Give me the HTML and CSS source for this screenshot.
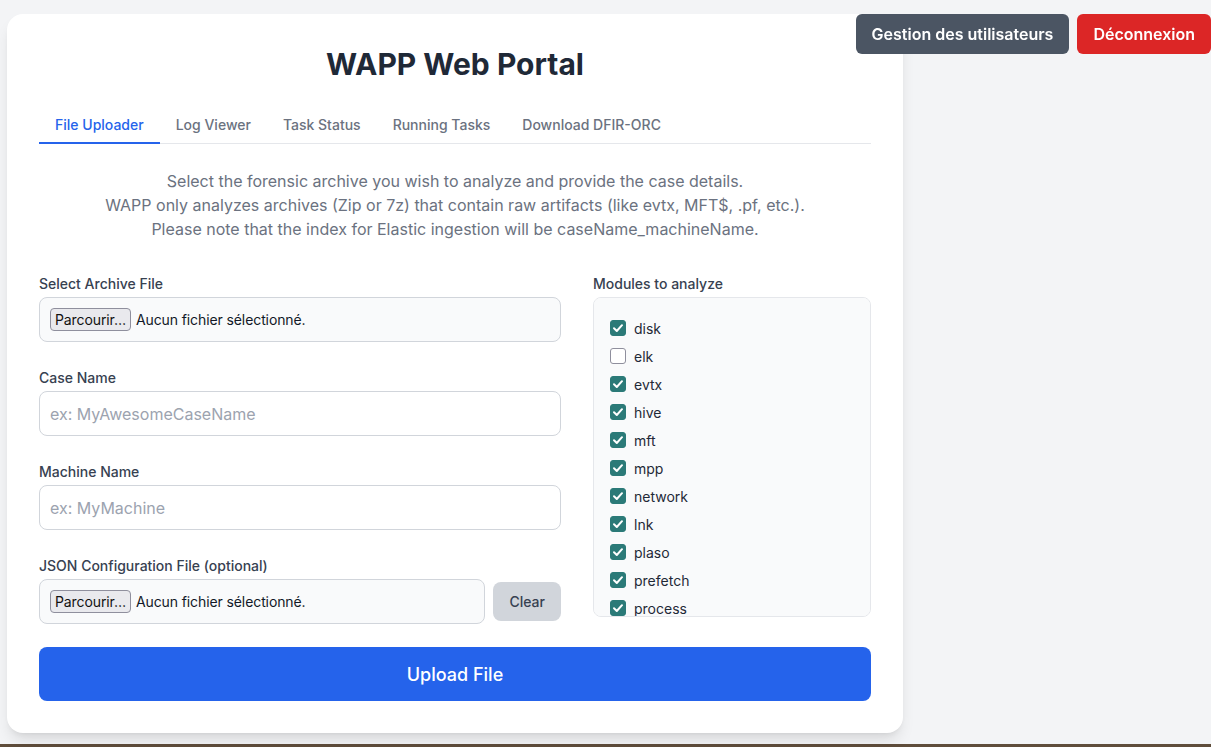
FILE: index.html
```html
<!DOCTYPE html>
<html lang="fr">
<head>
<meta charset="utf-8">
<title>WAPP Web Portal</title>
<link rel="stylesheet" href="styles.css">
</head>
<body>
<div class="top-actions">
  <button class="action-btn users-btn" type="button">Gestion des utilisateurs</button>
  <button class="action-btn logout-btn" type="button">Déconnexion</button>
</div>
<main class="page">
  <div class="card">
    <h1 class="title">WAPP Web Portal</h1>
    <nav class="tabs">
      <a class="tab active">File Uploader</a>
      <a class="tab">Log Viewer</a>
      <a class="tab">Task Status</a>
      <a class="tab">Running Tasks</a>
      <a class="tab">Download DFIR-ORC</a>
    </nav>
    <p class="intro">Select the forensic archive you wish to analyze and provide the case details.<br>WAPP only analyzes archives (Zip or 7z) that contain raw artifacts (like evtx, MFT$, .pf, etc.).<br>Please note that the index for Elastic ingestion will be caseName_machineName.</p>
    <form class="upload-form">
      <div class="form-grid">
        <div class="col-left">
          <div class="field">
            <label class="field-label">Select Archive File</label>
            <div class="file-input"><span class="file-btn">Parcourir…</span><span class="file-name">Aucun fichier sélectionné.</span></div>
          </div>
          <div class="field">
            <label class="field-label">Case Name</label>
            <input class="text-input" type="text" placeholder="ex: MyAwesomeCaseName">
          </div>
          <div class="field">
            <label class="field-label">Machine Name</label>
            <input class="text-input" type="text" placeholder="ex: MyMachine">
          </div>
          <div class="field">
            <label class="field-label">JSON Configuration File (optional)</label>
            <div class="file-row">
              <div class="file-input grow"><span class="file-btn">Parcourir…</span><span class="file-name">Aucun fichier sélectionné.</span></div>
              <button class="clear-btn" type="button">Clear</button>
            </div>
          </div>
        </div>
        <div class="col-right">
          <label class="field-label">Modules to analyze</label>
          <div class="modules">
            <div class="module"><span class="box checked"><svg viewBox="0 0 16 16" width="16" height="16"><path d="M4 8.3 L6.8 11 L12 5.2" fill="none" stroke="#fff" stroke-width="2" stroke-linecap="round" stroke-linejoin="round"/></svg></span>disk</div>
            <div class="module"><span class="box"></span>elk</div>
            <div class="module"><span class="box checked"><svg viewBox="0 0 16 16" width="16" height="16"><path d="M4 8.3 L6.8 11 L12 5.2" fill="none" stroke="#fff" stroke-width="2" stroke-linecap="round" stroke-linejoin="round"/></svg></span>evtx</div>
            <div class="module"><span class="box checked"><svg viewBox="0 0 16 16" width="16" height="16"><path d="M4 8.3 L6.8 11 L12 5.2" fill="none" stroke="#fff" stroke-width="2" stroke-linecap="round" stroke-linejoin="round"/></svg></span>hive</div>
            <div class="module"><span class="box checked"><svg viewBox="0 0 16 16" width="16" height="16"><path d="M4 8.3 L6.8 11 L12 5.2" fill="none" stroke="#fff" stroke-width="2" stroke-linecap="round" stroke-linejoin="round"/></svg></span>mft</div>
            <div class="module"><span class="box checked"><svg viewBox="0 0 16 16" width="16" height="16"><path d="M4 8.3 L6.8 11 L12 5.2" fill="none" stroke="#fff" stroke-width="2" stroke-linecap="round" stroke-linejoin="round"/></svg></span>mpp</div>
            <div class="module"><span class="box checked"><svg viewBox="0 0 16 16" width="16" height="16"><path d="M4 8.3 L6.8 11 L12 5.2" fill="none" stroke="#fff" stroke-width="2" stroke-linecap="round" stroke-linejoin="round"/></svg></span>network</div>
            <div class="module"><span class="box checked"><svg viewBox="0 0 16 16" width="16" height="16"><path d="M4 8.3 L6.8 11 L12 5.2" fill="none" stroke="#fff" stroke-width="2" stroke-linecap="round" stroke-linejoin="round"/></svg></span>lnk</div>
            <div class="module"><span class="box checked"><svg viewBox="0 0 16 16" width="16" height="16"><path d="M4 8.3 L6.8 11 L12 5.2" fill="none" stroke="#fff" stroke-width="2" stroke-linecap="round" stroke-linejoin="round"/></svg></span>plaso</div>
            <div class="module"><span class="box checked"><svg viewBox="0 0 16 16" width="16" height="16"><path d="M4 8.3 L6.8 11 L12 5.2" fill="none" stroke="#fff" stroke-width="2" stroke-linecap="round" stroke-linejoin="round"/></svg></span>prefetch</div>
            <div class="module"><span class="box checked"><svg viewBox="0 0 16 16" width="16" height="16"><path d="M4 8.3 L6.8 11 L12 5.2" fill="none" stroke="#fff" stroke-width="2" stroke-linecap="round" stroke-linejoin="round"/></svg></span>process</div>
          </div>
        </div>
      </div>
      <button class="upload-btn" type="button">Upload File</button>
    </form>
  </div>
</main>
</body>
</html>
```
FILE: styles.css
```css
* { box-sizing: border-box; }

html, body { height: 100%; }

body {
  margin: 0;
  font-family: Inter, "Noto Sans", "Liberation Sans", sans-serif;
  background: linear-gradient(to top, #5f4d3b 0, #5f4d3b 3px, #f3f4f6 3px);
  color: #1f2937;
  overflow: hidden;
}

.top-actions {
  position: fixed;
  top: 14px;
  right: 0;
  display: flex;
  gap: 8px;
  z-index: 10;
}

.action-btn {
  height: 40px;
  padding: 0 16px;
  border: none;
  border-radius: 6px;
  color: #fff;
  font-family: inherit;
  font-size: 16px;
  font-weight: 600;
}

.users-btn { background: #4b5563; }
.logout-btn { background: #dc2626; }

.page {
  padding: 14px 0 0 7px;
}

.card {
  width: 896px;
  background: #fff;
  border-radius: 16px;
  box-shadow: 0 10px 15px -3px rgba(0,0,0,0.1), 0 4px 6px -4px rgba(0,0,0,0.1);
  padding: 32px 32px 32px;
}

.title {
  margin: 0 0 23px;
  text-align: center;
  font-size: 30px;
  line-height: 36px;
  font-weight: 700;
  color: #1f2937;
}

.tabs {
  display: flex;
  border-bottom: 1px solid #e5e7eb;
}

.tab {
  display: block;
  padding: 10px 16px 7px;
  font-size: 14px;
  line-height: 20px;
  font-weight: 500;
  color: #6b7280;
  border-bottom: 2px solid transparent;
  margin-bottom: -1px;
}

.tab.active {
  color: #2563eb;
  border-bottom-color: #2563eb;
}

.intro {
  margin: 25px 0 33px;
  text-align: center;
  font-size: 16px;
  line-height: 24px;
  color: #6b7280;
}

.form-grid {
  display: grid;
  grid-template-columns: 522px 278px;
  column-gap: 32px;
  align-items: start;
}

.col-left {
  display: flex;
  flex-direction: column;
  gap: 26px;
}

.field-label {
  display: block;
  font-size: 14px;
  line-height: 20px;
  font-weight: 500;
  color: #374151;
  margin-bottom: 3px;
}

.file-input {
  display: flex;
  align-items: center;
  height: 45px;
  padding: 0 10px;
  background: #f9fafb;
  border: 1px solid #d1d5db;
  border-radius: 8px;
  font-size: 14px;
  color: #111827;
}

.file-input.grow { flex: 1; }

.file-btn {
  display: inline-flex;
  align-items: center;
  height: 23px;
  padding: 0 4px;
  background: #e9e9ed;
  border: 1px solid #8f8f9d;
  border-radius: 4px;
  color: #111;
  margin-right: 5px;
  letter-spacing: -0.1px;
}

.file-name { letter-spacing: -0.1px; }

.text-input {
  display: block;
  width: 100%;
  height: 45px;
  padding: 0 10px;
  border: 1px solid #d1d5db;
  border-radius: 8px;
  background: #fff;
  font-family: inherit;
  font-size: 16px;
  color: #111827;
  outline: none;
}

.text-input::placeholder { color: #9ca3af; }

.file-row {
  display: flex;
  align-items: center;
  gap: 8px;
}

.clear-btn {
  height: 39px;
  padding: 0 16px;
  border: none;
  border-radius: 8px;
  background: #d1d5db;
  color: #374151;
  font-family: inherit;
  font-size: 14px;
  font-weight: 500;
}

.modules {
  height: 320px;
  overflow-y: auto;
  scrollbar-width: none;
  background: #f9fafb;
  border: 1px solid #e5e7eb;
  border-radius: 8px;
  padding: 20px 16px;
  display: flex;
  flex-direction: column;
  gap: 8px;
}

.module {
  display: flex;
  align-items: center;
  gap: 8px;
  flex: none;
  height: 20px;
  font-size: 14px;
  color: #1f2937;
}

.box {
  flex: none;
  width: 16px;
  height: 16px;
  border: 1px solid #8f8f9d;
  border-radius: 3px;
  background: #fff;
  display: flex;
}

.box.checked {
  background: #2b7a78;
  border-color: #2b7a78;
}

.box svg { margin: -1px; }

.upload-btn {
  display: block;
  width: 100%;
  height: 54px;
  margin-top: 23px;
  border: none;
  border-radius: 8px;
  background: #2563eb;
  color: #fff;
  font-family: inherit;
  font-size: 18px;
  font-weight: 500;
}
```
